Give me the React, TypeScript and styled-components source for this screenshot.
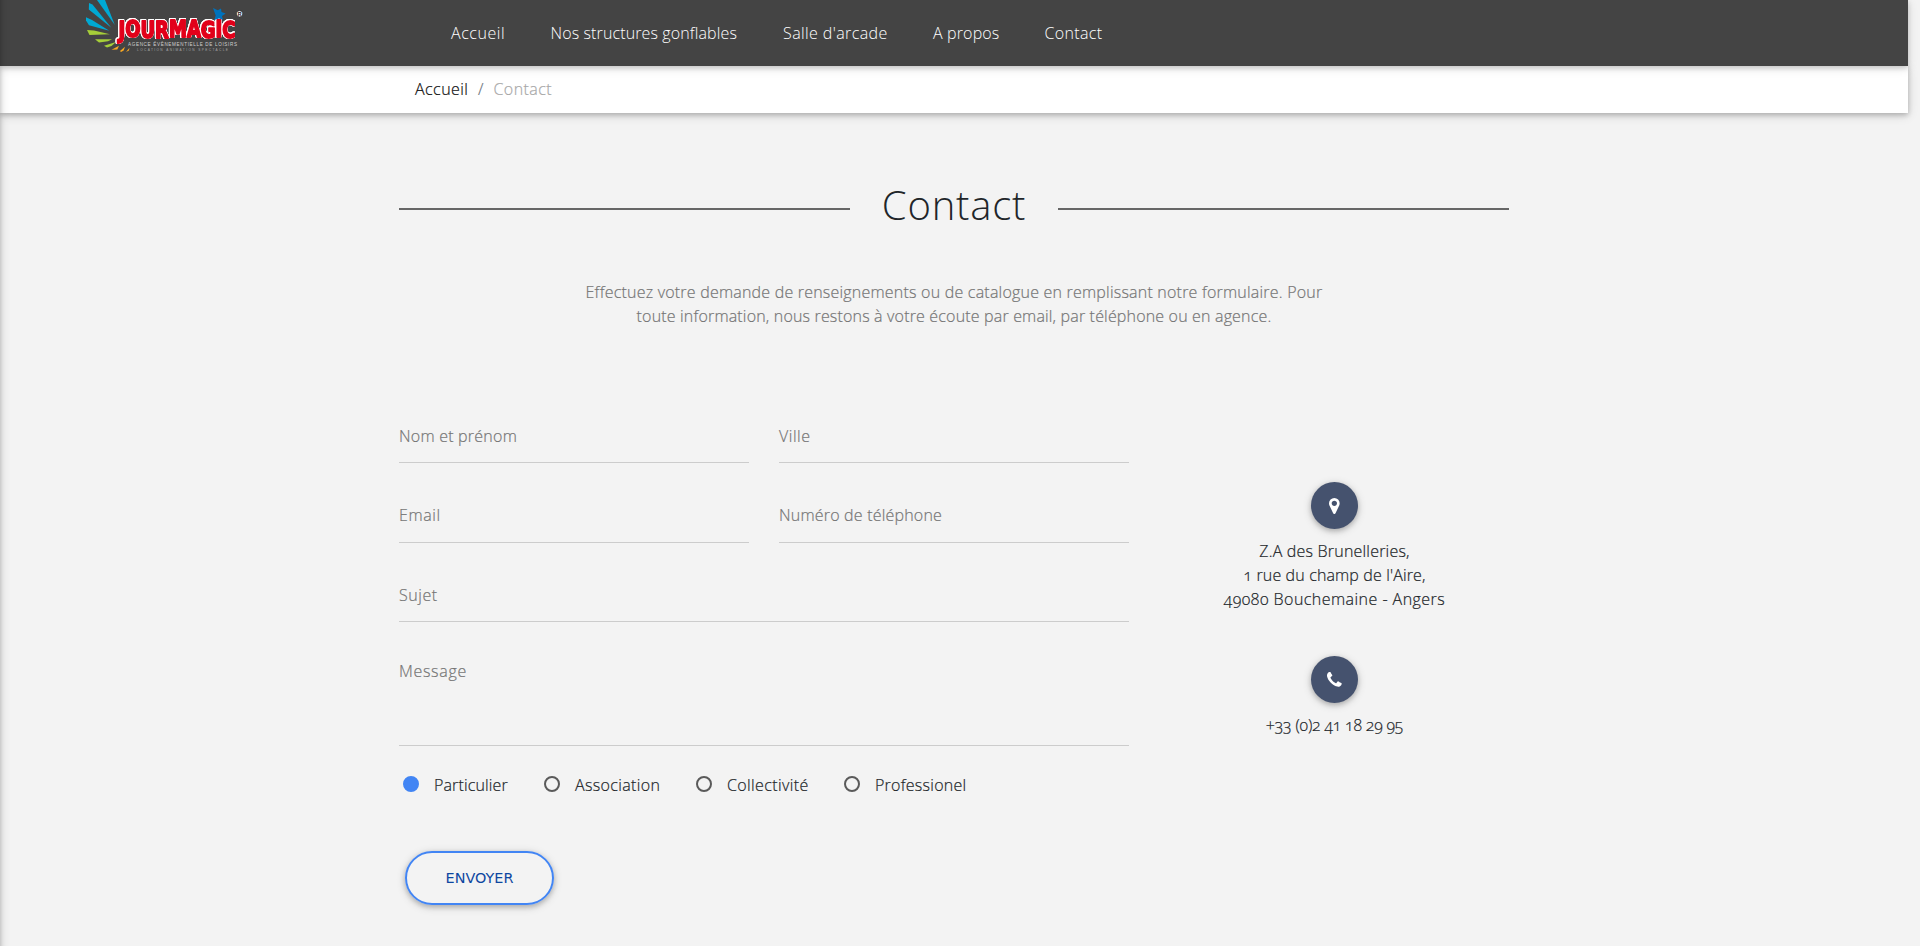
import React, { useState } from "react";
import styled, { createGlobalStyle } from "styled-components";

const GlobalStyle = createGlobalStyle`
  *, *::before, *::after { box-sizing: border-box; }
  html, body { margin: 0; padding: 0; }
  body {
    background: #f3f3f3;
    color: #212529;
    font-family: "Open Sans", "Noto Sans", sans-serif;
    font-size: 16px;
    font-weight: 300;
    line-height: 24px;
    font-feature-settings: "onum";
    overflow: hidden;
  }
`;

const SHADOW = "0 2px 5px 0 rgba(0, 0, 0, 0.16), 0 2px 10px 0 rgba(0, 0, 0, 0.12)";
const DEEP_SHADOW = "0 2px 5px 0 rgba(0, 0, 0, 0.2), 0 2px 10px 0 rgba(0, 0, 0, 0.16)";

const Page = styled.div`
  width: 1908px;
  height: 946px;
`;

const SideNavEdge = styled.div`
  position: fixed;
  z-index: 10;
  top: -20px;
  bottom: -20px;
  left: -240px;
  width: 240px;
  box-shadow: ${DEEP_SHADOW};
`;

const NavBar = styled.header`
  position: relative;
  z-index: 2;
  display: flex;
  align-items: flex-start;
  height: 66px;
  padding-left: 80px;
  background: #444;
  box-shadow: ${SHADOW};
`;

const LogoSvg = styled.svg`
  display: block;
  width: 170px;
  height: 60px;
  margin-right: 201px;
`;

const LogoWord = styled.text`
  font: 700 23px "DejaVu Sans", sans-serif;
  fill: #e2001a;
  stroke: #e2001a;
  stroke-width: 1.8px;
  stroke-linejoin: round;
  filter: drop-shadow(0.7px 0 0 #fff) drop-shadow(-0.7px 0 0 #fff) drop-shadow(0 0.7px 0 #fff)
    drop-shadow(0 -0.7px 0 #fff) drop-shadow(0.6px 0.6px 0 #111);
`;

const NavLinks = styled.nav`
  display: flex;
  padding-top: 21px;
`;

const Tracked = styled.span<{ $tracking?: number }>`
  letter-spacing: ${(p) => p.$tracking ?? 0.2}px;
  white-space: nowrap;
`;

const NavLink = styled.a<{ $width: number; $tracking: number }>`
  width: ${(p) => p.$width}px;
  letter-spacing: ${(p) => p.$tracking}px;
  color: #fff;
  white-space: nowrap;
`;

const Breadcrumb = styled.div`
  display: flex;
  height: 47px;
  padding: 11px 0 0 415px;
  background: #fff;
  box-shadow: ${DEEP_SHADOW};
  letter-spacing: 0.45px;
  -webkit-text-stroke-width: 0.2px;
`;

const Crumb = styled.span<{ $muted?: boolean }>`
  color: ${(p) => (p.$muted ? "#a8a8a8" : "#111")};
`;

const CrumbSlash = styled.span`
  width: 25px;
  text-align: center;
  color: #6c757d;
`;

const Container = styled.main`
  width: 1110px;
  margin: 0 auto;
  padding-top: 66px;
`;

const TitleRow = styled.div`
  display: grid;
  grid-template-columns: 451px 1fr 451px;
  align-items: center;
  height: 48px;
`;

const Rule = styled.div`
  height: 2px;
  margin-top: 10px;
  background: #666;
`;

const Title = styled.h1`
  margin: 0;
  padding-top: 2px;
  font-size: 40px;
  font-weight: 300;
  line-height: 48px;
  letter-spacing: 0.8px;
  text-align: center;
`;

const Intro = styled.p`
  display: flex;
  flex-direction: column;
  align-items: center;
  margin: 53px 0 96px;
  color: #757575;
  -webkit-text-stroke-width: 0.2px;
`;

const Columns = styled.div`
  display: grid;
  grid-template-columns: 730px 351px;
  column-gap: 30px;
  -webkit-text-stroke-width: 0.2px;
`;

const Form = styled.form`
  display: flex;
  flex-direction: column;
`;

const FieldRow = styled.div<{ $height: number; $gap: number }>`
  display: flex;
  gap: 30px;
  height: ${(p) => p.$height}px;
  margin-bottom: ${(p) => p.$gap}px;
`;

const Field = styled.label<{ $tracking: number }>`
  flex: 1;
  border-bottom: 1px solid #ccc;
  color: #757575;
  letter-spacing: ${(p) => p.$tracking}px;
`;

const Radios = styled.div`
  display: flex;
  height: 24px;
  padding-left: 4px;
`;

const RadioOption = styled.div<{ $width: number }>`
  display: flex;
  width: ${(p) => p.$width}px;
  gap: 15px;
  cursor: pointer;
`;

const Dot = styled.span<{ $checked: boolean }>`
  flex: none;
  width: 16px;
  height: 16px;
  margin-top: 3px;
  border: 2px solid ${(p) => (p.$checked ? "#4285f4" : "#5a5a5a")};
  border-radius: 50%;
  background: ${(p) => (p.$checked ? "#4285f4" : "transparent")};
`;

const SendButton = styled.button`
  width: 149px;
  height: 54px;
  margin: 54px 0 0 6px;
  padding: 0;
  border: 2px solid #4285f4;
  border-radius: 27px;
  background: transparent;
  box-shadow: ${DEEP_SHADOW};
  color: #0d47a1;
  font: 400 14.4px/20px "DejaVu Sans", sans-serif;
  -webkit-text-stroke-width: 0;
`;

const Infos = styled.address`
  display: flex;
  flex-direction: column;
  align-items: center;
  padding-top: 58px;
  font-style: normal;
`;

const InfoBlock = styled.div`
  display: flex;
  flex-direction: column;
  align-items: center;
  margin-bottom: 45px;
`;

const Badge = styled.span`
  display: flex;
  align-items: center;
  justify-content: center;
  width: 47px;
  height: 47px;
  margin-bottom: 10px;
  border-radius: 50%;
  background: #45526e;
  box-shadow: ${DEEP_SHADOW};
`;

function Logo() {
  return (
    <LogoSvg viewBox="80 0 170 60" aria-label="Jour Magic">
      <g fill="#00a9d4">
        <path d="M97 0H105L114.8 25Z" />
        <path d="M89 3L92.5 4.5L111.3 27.8L88.8 9.5Z" />
        <path d="M86 17.3L92 20L109.3 30.7L89 25.3L86 20.5Z" />
      </g>
      <g fill="#a6ce39">
        <path d="M87 30L94 30.5L110 34.3L89.5 35Z" />
        <path d="M95 39.3H112L108 41.3L99 42.5Z" />
        <path d="M116 42L104 45.7L107 47.5L111.5 46Z" />
      </g>
      <g fill="#f7a823">
        <path d="M111.5 49.7L119 45.7L117.3 49.5Z" />
        <path d="M120 51L125 46.7L123.7 50.5L121 52Z" />
        <path d="M126 52L129.5 47.7L129 50.5Z" />
      </g>
      <LogoWord x="118.5" y="37" dy="1 -1 0.5 0 -0.5 0 0.7 -0.7 0.5" textLength="117" lengthAdjust="spacingAndGlyphs">JOURMAGIC</LogoWord>
      <path d="M213 8L217.8 10.3L221 8.4L221.5 12L225.7 13.5L222 16L223 19.7L219 18.5L214.3 20L215.7 15.5Z" fill="#0072bc" />
      <circle cx="239.6" cy="13.8" r="3.1" fill="#fff" stroke="#111" strokeWidth="0.6" />
      <text x="239.6" y="15.7" fontFamily="Liberation Sans, sans-serif" fontWeight="700" fontSize="5.2" textAnchor="middle" fill="#111">R</text>
      <text x="128" y="46.3" textLength="109" lengthAdjust="spacing" fontFamily="Liberation Sans, sans-serif" fontSize="4.6" fill="#d0d0d0">AGENCE ÉVÈNEMENTIELLE DE LOISIRS</text>
      <text x="137" y="51.3" textLength="91" lengthAdjust="spacing" fontFamily="Liberation Sans, sans-serif" fontSize="3.2" fill="#a8a8a8">LOCATION ANIMATION SPECTACLE</text>
    </LogoSvg>
  );
}

const MarkerIcon = () => (
  <svg width="10.67" height="16" viewBox="128 128 1024 1536" fill="#fff">
    <path d="M896 640q0-106-75-181t-181-75-181 75-75 181 75 181 181 75 181-75 75-181zm256 0q0 109-33 179l-364 774q-16 33-47.5 52t-67.5 19-67.5-19-46.5-52l-365-774q-33-70-33-179 0-212 150-362t362-150 362 150 150 362z" />
  </svg>
);

const PhoneIcon = () => (
  <svg width="14.67" height="14.67" viewBox="0 128 1408 1408" fill="#fff">
    <path d="M1408 1240q0 27-10 70.5t-21 68.5q-21 50-122 106-94 51-186 51-27 0-52.5-3.5t-57.5-12.5-47.5-14.5-55.5-20.5-49-18q-98-35-175-83-128-79-264.5-215.5t-215.5-264.5q-48-77-83-175-3-9-18-49t-20.5-55.5-14.5-47.5-12.5-57.5-3.5-52.5q0-92 51-186 56-101 106-122 25-11 68.5-21t70.5-10q14 0 21 3 18 6 53 76 11 19 30 54t35 63.5 31 53.5q3 4 17.5 25t21.5 35.5 7 28.5q0 20-28.5 50t-62 55-62 53-28.5 46q0 9 5 22.5t8.5 20.5 14 24 11.5 19q76 137 174 235t235 174q2 1 19 11.5t24 14 20.5 8.5 22.5 5q18 0 46-28.5t53-62 55-62 50-28.5q14 0 28.5 7t35.5 21.5 25 17.5q25 15 53.5 31t63.5 35 54 30q70 35 76 53 3 7 3 21z" />
  </svg>
);

const LINKS = [
  { label: "Accueil", width: 99.5, tracking: 0.55 },
  { label: "Nos structures gonflables", width: 232.5, tracking: 0.12 },
  { label: "Salle d'arcade", width: 150, tracking: 0.4 },
  { label: "A propos", width: 111.5, tracking: 0.15 },
  { label: "Contact", width: 60, tracking: 0.35 },
];

const PROFILES = [
  { label: "Particulier", width: 141, tracking: 0.13 },
  { label: "Association", width: 152, tracking: 0.35 },
  { label: "Collectivité", width: 148, tracking: 0.38 },
  { label: "Professionel", width: 130, tracking: 0.26 },
];

export default function App() {
  const [profile, setProfile] = useState("Particulier");
  return (
    <Page>
      <GlobalStyle />
      <SideNavEdge />
      <NavBar>
        <Logo />
        <NavLinks>
          {LINKS.map((l) => (
            <NavLink key={l.label} $width={l.width} $tracking={l.tracking}>{l.label}</NavLink>
          ))}
        </NavLinks>
      </NavBar>
      <Breadcrumb>
        <Crumb>Accueil</Crumb>
        <CrumbSlash>/</CrumbSlash>
        <Crumb $muted>Contact</Crumb>
      </Breadcrumb>
      <Container>
        <TitleRow>
          <Rule />
          <Title>Contact</Title>
          <Rule />
        </TitleRow>
        <Intro>
          <Tracked $tracking={0.21}>Effectuez votre demande de renseignements ou de catalogue en remplissant notre formulaire. Pour</Tracked>
          <Tracked $tracking={0.17}>toute information, nous restons à votre écoute par email, par téléphone ou en agence.</Tracked>
        </Intro>
        <Columns>
          <Form>
            <FieldRow $height={39} $gap={40}>
              <Field $tracking={0.23}>Nom et prénom</Field>
              <Field $tracking={0.55}>Ville</Field>
            </FieldRow>
            <FieldRow $height={40} $gap={40}>
              <Field $tracking={0.6}>Email</Field>
              <Field $tracking={0.2}>Numéro de téléphone</Field>
            </FieldRow>
            <FieldRow $height={39} $gap={37}>
              <Field $tracking={0.55}>Sujet</Field>
            </FieldRow>
            <FieldRow $height={87} $gap={27}>
              <Field $tracking={0.68}>Message</Field>
            </FieldRow>
            <Radios>
              {PROFILES.map((p) => (
                <RadioOption key={p.label} $width={p.width} onClick={() => setProfile(p.label)}>
                  <Dot $checked={profile === p.label} />
                  <Tracked $tracking={p.tracking}>{p.label}</Tracked>
                </RadioOption>
              ))}
            </Radios>
            <SendButton type="button">ENVOYER</SendButton>
          </Form>
          <Infos>
            <InfoBlock>
              <Badge><MarkerIcon /></Badge>
              <Tracked $tracking={0.2}>Z.A des Brunelleries,</Tracked>
              <Tracked $tracking={0.14}>1 rue du champ de l'Aire,</Tracked>
              <Tracked $tracking={0.46}>49080 Bouchemaine - Angers</Tracked>
            </InfoBlock>
            <InfoBlock>
              <Badge><PhoneIcon /></Badge>
              <Tracked $tracking={-0.2}>+33 (0)2 41 18 29 95</Tracked>
            </InfoBlock>
          </Infos>
        </Columns>
      </Container>
    </Page>
  );
}
